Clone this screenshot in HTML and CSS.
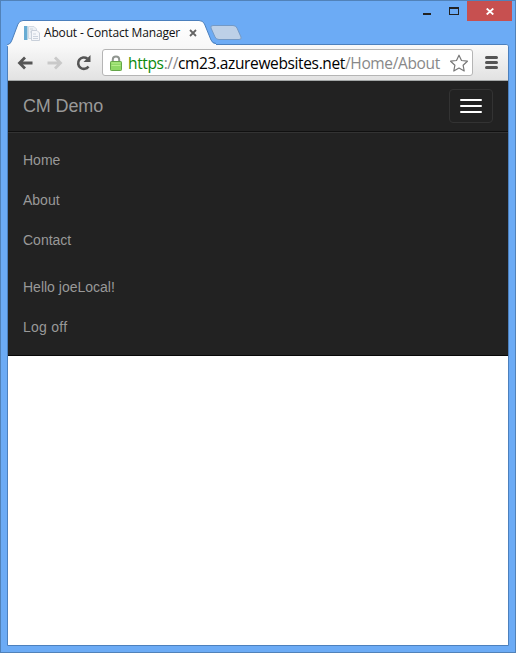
FILE: index.html
```html
<!DOCTYPE html>
<html lang="en">
<head>
<meta charset="utf-8">
<title>About - Contact Manager</title>
<link rel="stylesheet" href="styles.css">
</head>
<body>
<div class="window">
  <header class="titlebar">
    <svg class="tab-shape" width="240" height="26" viewBox="0 0 240 26">
      <defs>
        <linearGradient id="tabFill" x1="0" y1="0" x2="0" y2="1"><stop offset="0" stop-color="#fff"/><stop offset="1" stop-color="#f8f8f8"/></linearGradient>
      </defs>
      <path d="M0 26V25Q4 24 5 20L11 4Q12.500 .5 16 .5H192Q196 .5 197.500 4L204 20Q205.500 24 209 24V26Z" fill="url(#tabFill)"/>
      <path d="M0 25Q4 24 5 20L11 4Q12.500 .5 16 .5H192Q196 .5 197.500 4L204 20Q205.500 23.500 209 23.500" fill="none" stroke="#4c80bd"/>
      <path d="M206 5.500H226Q229 5.500 230 8L234 17Q235 19.500 232 19.500H212Q209 19.500 208 17L204 8Q203 5.500 206 5.500Z" fill="#bdd0e7" stroke="#7399c6"/>
    </svg>
    <div class="tab">
      <svg class="favicon" width="16" height="16" viewBox="0 0 16 16">
        <path d="M0 1H4V15H0Z" fill="#68acd3"/><path d="M3 1H4V15H3Z" fill="#b8d8e8"/>
        <path d="M4.500 1.500H10L12.500 4V13.500H4.500Z" fill="#edf1f5" stroke="#d2d9e1"/>
        <path d="M7.500 5.500H13L15.500 8V15.500H7.500Z" fill="#f5f7fa" stroke="#c9d0da"/>
        <path d="M6 4H9M6 7H7M9 9H12M9 11.500H14M9 13.500H14" stroke="#cbd3dd"/>
      </svg>
      <span class="tab-title">About - Contact Manager</span>
      <svg class="tab-close" width="8" height="8" viewBox="0 0 8 8"><path d="M1 1L7 7M7 1L1 7" stroke="#646464" stroke-width="1.800"/></svg>
    </div>
    <div class="controls">
      <svg width="66" height="20" viewBox="0 0 66 20" shape-rendering="crispEdges"><path d="M22 12H30V14H22Z" fill="#222"/><path d="M48 6H58V14H48ZM49 8V13H57V8Z" fill="#222" fill-rule="evenodd"/></svg>
      <div class="close"><svg width="8" height="7" viewBox="0 0 8 7"><path d="M.7 .5L7.300 6.500M7.300 .5L.7 6.500" stroke="#fff" stroke-width="1.800"/></svg></div>
    </div>
  </header>
  <main class="browser">
    <div class="toolbar">
      <svg class="nav-icons" width="80" height="20" viewBox="0 0 80 20" fill="none">
        <path d="M9 4.500L3.500 10L9 15.500M4 10H16.500" stroke="#555" stroke-width="2.800"/>
        <path d="M39 4.500L44.500 10L39 15.500M44 10H31.500" stroke="#c9c9c9" stroke-width="2.800"/>
        <path d="M72.500 13.500A5.700 5.700 0 1 1 71.300 5.600" stroke="#555" stroke-width="2.600"/><path d="M74.500 2V9H67.500Z" fill="#555"/>
      </svg>
      <div class="address">
        <svg class="lock" width="12" height="16" viewBox="0 0 12 16">
          <path d="M2.800 8V4.400Q2.800 1.600 6 1.600T9.200 4.400V8" fill="none" stroke="#909590" stroke-width="2"/>
          <rect x=".5" y="6.500" width="11" height="9" rx=".8" fill="#8fd866" stroke="#64a548"/>
          <path d="M1.500 8H10.500M1.500 10.500H10.500" stroke="#b6ed8b"/>
        </svg>
        <span class="url"><span class="secure">https</span><span class="muted">://</span>cm23.azurewebsites.net<span class="muted">/Home/About</span></span>
        <svg class="star" width="20" height="18" viewBox="0 0 20 18"><path d="M10 1.200L12.500 6.500L18.400 7.200L14.100 11.200L15.200 17L10 14.100L4.800 17L5.900 11.200L1.600 7.200L7.500 6.500Z" fill="#fff" stroke="#777" stroke-width="1.200" stroke-linejoin="round"/></svg>
      </div>
      <svg class="menu" width="13" height="14" viewBox="0 0 13 14"><path d="M1.500 1.500H11.500M1.500 6.500H11.500M1.500 11.500H11.500" stroke="#555" stroke-width="3" stroke-linecap="round"/></svg>
    </div>
    <div class="page">
      <nav class="navbar">
        <div class="navbar-header">
          <span class="brand">CM Demo</span>
          <button class="toggle" aria-label="Menu"><i class="bar"></i><i class="bar"></i><i class="bar"></i></button>
        </div>
        <div class="collapse">
          <ul class="links"><li>Home</li><li>About</li><li>Contact</li></ul>
          <ul class="links"><li>Hello joeLocal!</li><li class="logoff">Log off</li></ul>
        </div>
      </nav>
    </div>
  </main>
</div>
</body>
</html>
```
FILE: styles.css
```css
* { box-sizing: border-box; }
body { margin: 0; overflow: hidden; }
svg { display: block; flex: none; }
.window {
  width: 516px;
  height: 653px;
  padding: 0 6px 6px;
  border: 1px solid #5182b9;
  background: #6cabf5;
  display: flex;
  flex-direction: column;
}
.titlebar {
  position: relative;
  height: 43px;
  flex: none;
  display: flex;
  justify-content: space-between;
  align-items: flex-start;
}
.tab-shape { position: absolute; left: 0; top: 19px; z-index: 2; }
.tab {
  position: relative;
  z-index: 3;
  height: 25px;
  margin-top: 19px;
  padding-left: 17px;
  display: flex;
  align-items: center;
}
.tab-title {
  width: 145px;
  margin-left: 4px;
  font: 12px/16px "Open Sans", sans-serif;
  letter-spacing: -.16px;
  color: #111;
  white-space: nowrap;
}
.controls { display: flex; margin-right: -3px; }
.close {
  width: 45px;
  height: 20px;
  background: #c75050;
  display: flex;
  align-items: center;
  justify-content: center;
  padding-top: 1px;
}
.browser {
  flex: 1;
  display: flex;
  flex-direction: column;
  border: 1px solid #4c80bd;
  border-radius: 3px 3px 0 0;
  background: #fff;
}
.toolbar {
  height: 36px;
  flex: none;
  padding: 0 10px 0 8px;
  display: flex;
  align-items: center;
  background: linear-gradient(#f9f9f9, #e2e2e2);
  border-bottom: 1px solid #a5a8a8;
  border-radius: 2px 2px 0 0;
}
.address {
  width: 371px;
  height: 27px;
  margin-left: 6px;
  padding: 0 3px 0 7px;
  display: flex;
  align-items: center;
  background: #fff;
  border: 1px solid #b5b5b5;
  border-radius: 3px;
}
.url {
  flex: 1;
  min-width: 0;
  margin-left: 6px;
  font: 15.500px/22px "Open Sans", sans-serif;
  letter-spacing: -.36px;
  color: #000;
  white-space: nowrap;
}
.secure { color: #0b8a0b; }
.muted { color: #888; }
.menu { margin-left: auto; }
.page { flex: 1; font-family: "Liberation Sans", Arial, sans-serif; color: #999; }
.navbar { height: 275px; background: #222; border-bottom: 1px solid #080808; }
.navbar-header {
  height: 51px;
  padding: 0 15px;
  border-bottom: 1px solid #101010;
  display: flex;
  align-items: center;
  justify-content: space-between;
}
.brand { font-size: 18px; line-height: 20px; letter-spacing: -.14px; }
.toggle {
  width: 44px;
  height: 34px;
  padding: 0 10px;
  display: flex;
  flex-direction: column;
  align-items: stretch;
  justify-content: center;
  gap: 4px;
  background: transparent;
  border: 1px solid #333;
  border-radius: 4px;
}
.bar { height: 2px; border-radius: 1px; background: #fff; }
.collapse { padding: 0 15px; border-top: 1px solid #333; }
.links {
  list-style: none;
  margin: 7px 0;
  padding: 0;
  font-size: 14px;
  line-height: 20px;
}
.links li { padding: 10px 0; }
.logoff { letter-spacing: .25px; }
```
